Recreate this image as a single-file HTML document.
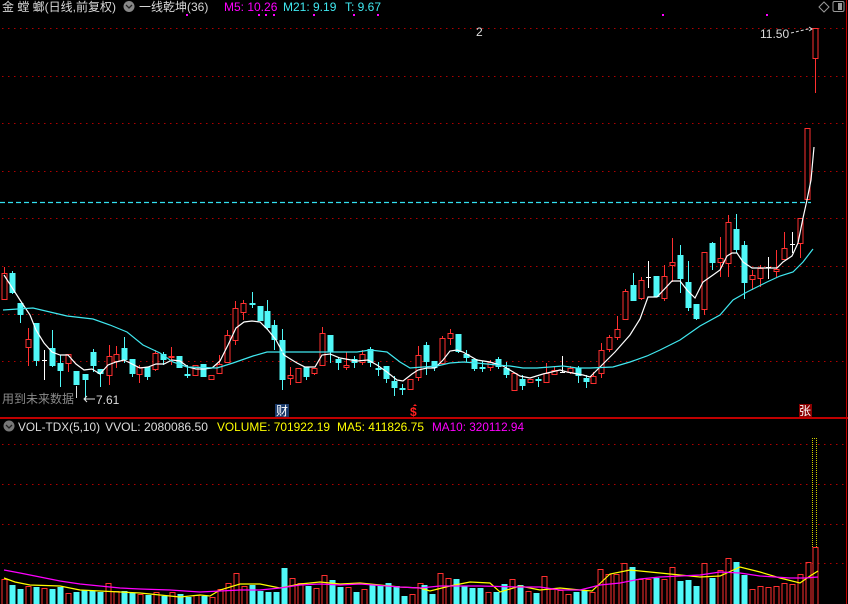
<!DOCTYPE html>
<html><head><meta charset="utf-8"><style>
html,body{margin:0;padding:0;background:#000;width:848px;height:604px;overflow:hidden}
svg{display:block}
text{font-family:"Liberation Sans","Noto Sans CJK SC",sans-serif;font-size:12px}
</style></head><body>
<svg id="s" width="848" height="604" viewBox="0 0 848 604" xmlns="http://www.w3.org/2000/svg">
<rect width="848" height="604" fill="#000"/>
<g stroke="#b00000" stroke-width="1" stroke-dasharray="1.5,4.5">
<line x1="2" y1="28.5" x2="844" y2="28.5"/><line x1="2" y1="76.5" x2="844" y2="76.5"/>
<line x1="2" y1="123.5" x2="844" y2="123.5"/><line x1="2" y1="171.5" x2="844" y2="171.5"/>
<line x1="2" y1="218.5" x2="844" y2="218.5"/><line x1="2" y1="266.5" x2="844" y2="266.5"/>
<line x1="2" y1="314.5" x2="844" y2="314.5"/><line x1="2" y1="361.5" x2="844" y2="361.5"/>
<line x1="2" y1="444.5" x2="844" y2="444.5"/><line x1="2" y1="484.5" x2="844" y2="484.5"/>
<line x1="2" y1="524.5" x2="844" y2="524.5"/><line x1="2" y1="563.5" x2="844" y2="563.5"/>
</g>
<line x1="0" y1="202.5" x2="811" y2="202.5" stroke="#33e0f0" stroke-width="1.3" stroke-dasharray="5,3"/>
<line x1="0" y1="418" x2="848" y2="418" stroke="#c00000" stroke-width="2"/>
<line x1="846.5" y1="0" x2="846.5" y2="604" stroke="#c00000" stroke-width="1"/>
<g id="cd"></g>
<g id="vb"></g>
<polyline fill="none" stroke="#fff" stroke-width="1.2" points="4,275 20,300 30,315 36,330 44,343 52,352 60,355 68,355 76,364 84,370 92,369 100,374 108,365 116,362 124,360 132,364 140,368 148,367 156,364 164,364 172,360 180,361 188,367 196,369 204,369 212,368 220,361 228,345 236,328 244,322 252,321 260,322 268,330 276,340 284,355 292,360 297,363 305,367 315,367 322,355 330,354 340,358 357,361 368,360 377,365 387,372 397,380 403,381 412,374 418,370 427,368 435,368 443,360 450,351 457,350 463,352 477,360 490,362 503,366 520,376 530,378 543,374 560,370 567,372 583,375 590,377 600,367 615,352 630,335 640,319 648,297 657,297 672,281 680,281 687,290 695,298 703,282 713,275 720,270 727,256 732,253 737,253 743,262 752,268 777,268 783,262 792,256 798,243 803,218 807,200 811,180 814,147"/>
<polyline fill="none" stroke="#40e8f0" stroke-width="1.2" points="3,310 33,308 67,316 93,319 110,325 127,332 143,345 160,353 173,362 187,367 217,368 233,363 253,356 267,352 300,352 323,352 357,352 370,350 387,352 400,362 410,368 423,367 437,366 450,363 463,362 477,363 497,365 510,366 523,368 537,368 563,366 577,368 590,368 613,367 630,362 647,356 660,350 680,340 700,326 720,315 733,300 747,292 767,282 780,276 793,272 803,262 813,249"/>
<polyline fill="none" stroke="#ffff00" stroke-width="1.2" points="4,578 15,582 30,585 60,586 80,590 100,591 140,593 160,595 180,597 200,595 210,596 220,590 240,584 260,584 280,588 300,584 320,582 340,584 360,583 380,585 400,587 420,588 430,591 450,586 470,582 490,583 500,592 520,586 540,590 560,588 580,590 592,591 610,574 630,570 650,572 680,575 700,577 720,576 740,567 760,572 780,578 800,583 810,576 818,571"/>
<polyline fill="none" stroke="#ff00ff" stroke-width="1.2" points="4,570 20,573 40,577 60,581 80,584 100,586 120,588 140,589 170,590 200,592 220,591 240,590 260,590 280,588 300,585 320,584 340,585 360,584 400,587 420,588 440,586 480,586 520,587 540,587 560,590 580,590 600,585 620,583 640,579 660,577 680,576 700,575 720,572 740,573 760,576 790,578 805,578 818,577"/>
<g stroke="#d0d000" stroke-width="1" stroke-dasharray="1,1"><line x1="812.5" y1="438" x2="812.5" y2="547"/><line x1="816.5" y1="438" x2="816.5" y2="547"/><line x1="812" y1="438.5" x2="817" y2="438.5"/></g>
<g fill="#ff00ff"><rect x="186" y="14" width="2" height="2"/><rect x="258" y="14" width="2" height="2"/><rect x="265" y="14" width="2" height="2"/><rect x="273" y="14" width="2" height="2"/><rect x="313" y="14" width="2" height="2"/><rect x="353" y="14" width="2" height="2"/><rect x="377" y="14" width="2" height="2"/><rect x="662" y="14" width="2" height="2"/><rect x="766" y="14" width="2" height="2"/></g>
<text x="2" y="11" fill="#d8d8d8">金 螳 螂(日线,前复权)</text>
<circle cx="129" cy="6.5" r="5.5" fill="#888"/><path d="M126,5 L129,8 L132,5" fill="none" stroke="#222" stroke-width="1.3"/>
<text x="139" y="11" fill="#d8d8d8">一线乾坤(36)</text>
<text x="224" y="11" fill="#ff00ff">M5: 10.26</text>
<text x="283" y="11" fill="#40e8f0">M21: 9.19</text>
<text x="345" y="11" fill="#40e8f0">T: 9.67</text>
<path d="M819,7 L824,2 L829,7 L824,12 Z" fill="none" stroke="#999" stroke-width="1"/>
<rect x="833" y="1.5" width="11" height="10" rx="1.5" fill="none" stroke="#999" stroke-width="1"/><rect x="838" y="3" width="4" height="7" fill="#999"/>
<text x="476" y="36" fill="#ddd">2</text>
<text x="760" y="38" fill="#ddd">11.50</text>
<path d="M791,33 L808,29 L812,29" fill="none" stroke="#ddd" stroke-width="1" stroke-dasharray="3,2"/><path d="M809,27 L812,29 L809,31" fill="none" stroke="#ddd"/>
<text x="2" y="403" fill="#8a8a8a">用到未来数据</text>
<text x="96" y="404" fill="#ddd">7.61</text>
<path d="M84,399 L95,399 M87,396 L84,399 L87,402" fill="none" stroke="#ddd" stroke-width="1"/>
<line x1="76.5" y1="386" x2="76.5" y2="398" stroke="#ddd"/>
<rect x="275" y="404" width="14" height="13" fill="#1a3a6a"/><text x="276" y="415" fill="#fff">财</text>
<text x="410" y="416" fill="#ff2020" font-weight="bold">$</text><path d="M413,406 L415,404 L417,406" fill="#ff2020"/>
<rect x="799" y="404" width="13" height="13" fill="#8a0000"/><text x="799" y="415" fill="#fff">张</text>
<circle cx="9" cy="426" r="5.5" fill="#777"/><path d="M6,425 L9,428 L12,425" fill="none" stroke="#222" stroke-width="1.3"/>
<text x="18" y="431" fill="#ddd" textLength="82" lengthAdjust="spacingAndGlyphs">VOL-TDX(5,10)</text>
<text x="105" y="431" fill="#ddd" textLength="103" lengthAdjust="spacingAndGlyphs">VVOL: 2080086.50</text>
<text x="217" y="431" fill="#ffff00" textLength="113" lengthAdjust="spacingAndGlyphs">VOLUME: 701922.19</text>
<text x="337" y="431" fill="#ffff00" textLength="87" lengthAdjust="spacingAndGlyphs">MA5: 411826.75</text>
<text x="432" y="431" fill="#ff00ff" textLength="92" lengthAdjust="spacingAndGlyphs">MA10: 320112.94</text>
</svg>
<script>
var C=[[4,'r',273,299,267,299],[12,'c',273,293,271,294],[20,'c',303,315,303,323],[28,'r',339,347,328,366],[36,'c',323,361,323,366],[44,'w',360,360,350,380],[52,'c',348,366,330,367],[60,'c',363,371,355,387],[68,'r',354,363,354,372],[76,'c',371,385,371,385],[85,'c',374,380,374,400],[93,'c',352,366,349,372],[100,'c',369,374,369,387],[109,'r',356,375,345,385],[116,'r',354,361,346,368],[124,'c',348,360,337,363],[132,'c',359,374,359,377],[139,'r',367,374,365,383],[147,'c',367,377,367,380],[155,'r',353,369,350,371],[163,'c',354,360,352,365],[171,'r',356,357,347,365],[179,'c',356,368,356,368],[187,'c',374,375,365,378],[195,'r',365,375,365,376],[203,'c',364,377,364,377],[211,'r',375,379,375,379],[219,'r',364,373,355,373],[227,'r',335,362,330,362],[235,'r',308,340,301,345],[243,'r',303,312,300,320],[252,'c',303,304,292,308],[260,'c',306,321,306,321],[267,'c',311,328,300,330],[274,'c',325,340,320,350],[282,'c',340,380,329,390],[290,'r',375,378,367,385],[298,'r',368,382,368,382],[306,'c',367,377,367,380],[314,'r',368,373,368,375],[322,'r',333,365,327,365],[330,'c',335,352,335,363],[338,'c',359,363,357,370],[346,'r',365,367,352,370],[354,'c',359,363,356,368],[362,'r',354,362,350,365],[370,'c',349,363,347,367],[378,'c',368,369,362,376],[386,'c',366,379,366,383],[394,'c',381,388,376,396],[402,'c',388,389,384,395],[410,'r',379,389,379,389],[418,'r',355,377,346,381],[426,'c',345,362,342,375],[434,'c',361,368,361,371],[442,'r',338,363,336,363],[450,'r',333,338,329,345],[458,'c',334,352,334,353],[466,'c',354,358,350,362],[474,'c',359,369,359,371],[482,'c',367,368,361,372],[490,'r',362,367,360,371],[498,'c',359,367,357,369],[506,'c',368,375,362,378],[514,'r',373,390,373,390],[522,'c',379,386,375,390],[530,'r',379,382,379,382],[538,'c',379,380,377,387],[546,'r',373,382,363,383],[554,'r',370,374,367,375],[562,'w',372,372,356,372],[570,'r',368,372,366,374],[578,'c',368,376,366,383],[586,'c',378,382,375,388],[593,'r',376,383,372,383],[601,'r',350,373,343,378],[609,'r',337,349,335,352],[617,'r',329,337,316,340],[625,'r',291,319,289,320],[633,'c',285,301,273,301],[641,'r',280,298,277,300],[648,'w',277,277,261,288],[656,'c',276,297,276,297],[664,'r',276,298,265,301],[672,'r',262,265,238,282],[680,'c',255,279,245,293],[688,'c',282,308,261,311],[696,'c',304,319,304,320],[704,'r',252,309,252,315],[712,'c',243,263,242,270],[720,'r',258,262,237,277],[728,'r',222,263,215,277],[736,'c',229,250,214,253],[744,'c',245,283,241,299],[752,'r',275,279,270,290],[760,'r',268,278,265,287],[768,'w',267,267,257,279],[776,'r',269,271,250,277],[784,'r',248,259,232,260],[792,'w',244,244,232,253],[800,'r',218,243,218,258],[807,'r',128,199,128,199],[815,'r',28,58,28,93]];
var V=[[4,'r',579],[12,'c',585],[20,'c',589],[28,'r',586],[36,'c',587],[44,'r',588],[52,'c',589],[60,'c',587],[68,'r',593],[76,'c',592],[84,'c',590],[92,'c',591],[100,'c',592],[108,'r',583],[116,'r',591],[124,'c',591],[132,'c',593],[140,'r',594],[148,'c',595],[156,'r',592],[164,'c',596],[172,'r',592],[180,'c',594],[188,'c',597],[196,'r',595],[204,'c',596],[212,'r',597],[220,'r',589],[228,'r',583],[236,'r',573],[244,'r',586],[252,'c',585],[260,'c',591],[268,'c',592],[276,'c',592],[284,'c',568],[292,'r',578],[300,'r',583],[308,'c',586],[316,'r',588],[324,'r',575],[332,'c',580],[340,'c',587],[348,'r',587],[356,'c',592],[364,'r',589],[372,'c',585],[380,'c',585],[388,'c',583],[396,'c',586],[404,'c',596],[412,'r',594],[420,'r',583],[424,'c',585],[432,'c',594],[440,'r',573],[448,'r',578],[456,'c',579],[464,'c',586],[472,'c',588],[480,'c',588],[488,'r',592],[496,'c',592],[504,'c',584],[512,'r',579],[520,'c',585],[528,'r',591],[536,'c',593],[544,'r',576],[552,'r',589],[560,'r',590],[568,'r',594],[576,'c',592],[584,'c',590],[592,'r',592],[600,'r',569],[608,'r',574],[616,'r',574],[624,'r',563],[632,'c',567],[640,'r',579],[648,'r',579],[656,'c',578],[664,'r',579],[672,'r',567],[680,'c',581],[688,'c',580],[696,'c',586],[704,'r',563],[712,'c',578],[720,'r',570],[728,'r',558],[736,'c',562],[744,'c',575],[752,'r',589],[760,'r',586],[768,'r',587],[776,'r',586],[784,'r',583],[792,'r',584],[800,'r',574],[808,'r',562],[815,'r',547]];
var ns='http://www.w3.org/2000/svg',cd=document.getElementById('cd'),vb=document.getElementById('vb');
function el(p,t,a){var e=document.createElementNS(ns,t);for(var k in a)e.setAttribute(k,a[k]);p.appendChild(e);return e;}
C.forEach(function(c){var x=c[0],t=c[1],col=t=='r'?'#ff3030':(t=='c'?'#50f8f8':'#ffffff');
el(cd,'line',{x1:x+.5,y1:c[4],x2:x+.5,y2:c[5],stroke:col,'stroke-width':1});
if(t=='w'){el(cd,'line',{x1:x-2,y1:c[2]+.5,x2:x+3,y2:c[2]+.5,stroke:col,'stroke-width':1});}
else if(t=='r'){el(cd,'rect',{x:x-2,y:c[2]+.5,width:5,height:Math.max(c[3]-c[2],1),fill:'#000',stroke:col,'stroke-width':1});}
else{el(cd,'rect',{x:x-2.5,y:c[2],width:6,height:Math.max(c[3]-c[2],2),fill:col});}});
V.forEach(function(v){var x=v[0];if(v[1]=='r')el(vb,'rect',{x:x-2,y:v[2]+.5,width:5,height:604-v[2],fill:'none',stroke:'#ff3030','stroke-width':1});else el(vb,'rect',{x:x-2.5,y:v[2],width:6,height:604-v[2],fill:'#50f8f8'});});
</script>
</body></html>
